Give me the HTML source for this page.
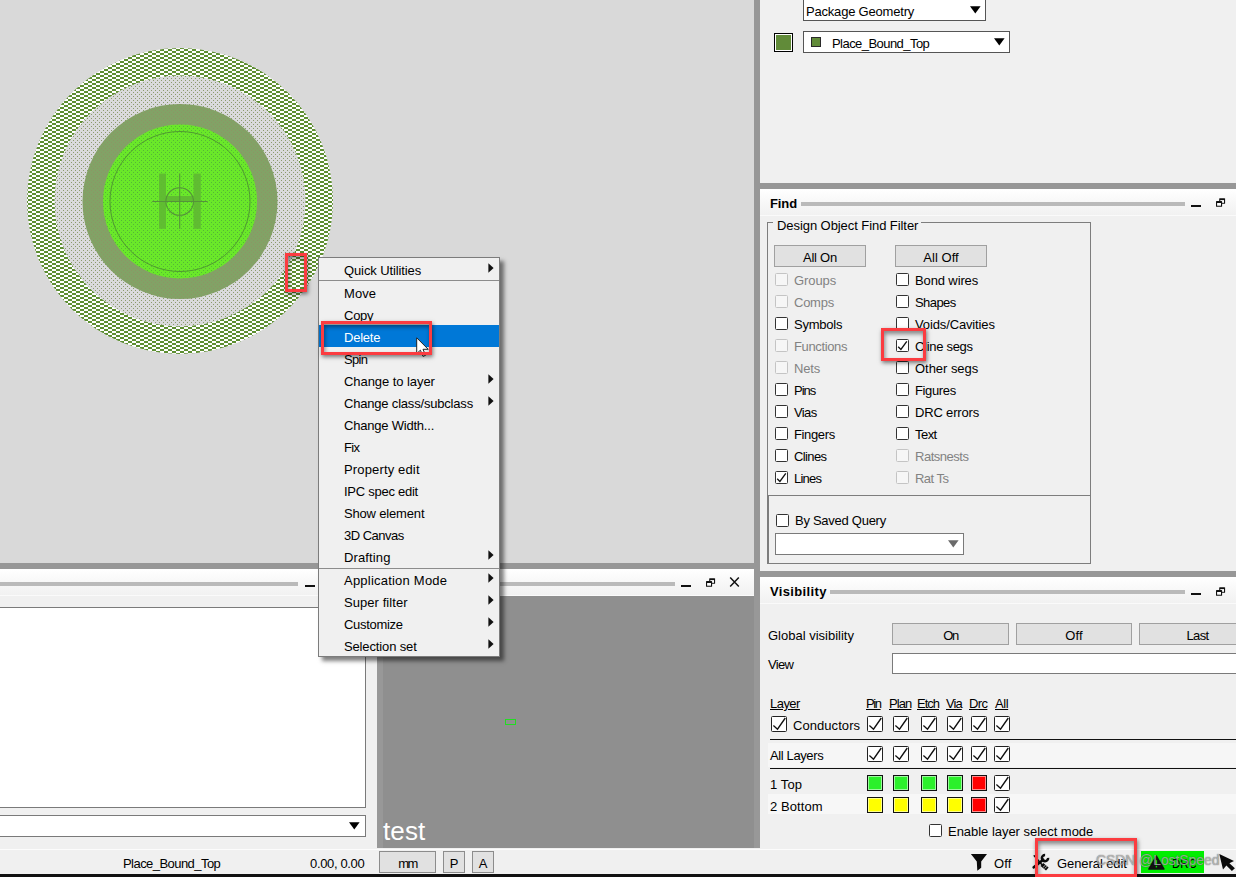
<!DOCTYPE html>
<html>
<head>
<meta charset="utf-8">
<title>PCB Editor</title>
<style>
html,body{margin:0;padding:0;}
body{width:1236px;height:877px;overflow:hidden;position:relative;background:#f0f0f0;
  font-family:"Liberation Sans",sans-serif;font-size:13px;color:#000;}
.abs{position:absolute;}
.t{position:absolute;white-space:nowrap;line-height:16px;height:16px;margin-top:1px;}
.dis{color:#828282;}
.div{position:absolute;background:#979797;}
.hdr{position:absolute;background:linear-gradient(#ffffff,#f1f1f1);border-bottom:1px solid #fafafa;box-sizing:border-box;}
.hline{position:absolute;height:4px;background:#bababa;}
.btn{position:absolute;box-sizing:border-box;background:#e1e1e1;border:1px solid #a0a0a0;text-align:center;white-space:nowrap;}
.cb{position:absolute;box-sizing:border-box;width:13px;height:13px;border:1px solid #333;border-radius:1.5px;background:#fff;}
.cb.d{border-color:#c4c4c4;background:#f6f6f6;}
.cb16{position:absolute;box-sizing:border-box;width:16px;height:16px;border:1px solid #222;border-radius:1.5px;background:#fff;}
.sw{position:absolute;box-sizing:border-box;width:16px;height:16px;border:1px solid #111;box-shadow:inset 0 0 0 1px rgba(255,255,255,.55);}
.inp{position:absolute;box-sizing:border-box;background:#fff;border:1px solid #7a7a7a;}
.red{position:absolute;box-sizing:border-box;border:3px solid #fb3c40;box-shadow:1px 2px 4px 0 rgba(0,0,0,.5),inset 1px 3px 4px 0 rgba(0,0,0,.44);}
</style>
</head>
<body>

<!-- ===== design canvas ===== -->
<div class="abs" id="canvas" style="left:0;top:0;width:754px;height:563px;background:#d9d9d9;overflow:hidden;">
<svg width="754" height="563" viewBox="0 0 754 563" style="position:absolute;left:0;top:0;">
  <defs>
    <pattern id="chk" x="0" y="1" width="8" height="4" patternUnits="userSpaceOnUse">
      <rect width="8" height="4" fill="#ffffff"/>
      <rect x="0" y="0" width="4" height="2" fill="#5e8f32"/>
      <rect x="4" y="2" width="4" height="2" fill="#5e8f32"/>
    </pattern>
    <pattern id="dotA" x="0" y="0" width="4" height="4" patternUnits="userSpaceOnUse">
      <rect width="4" height="4" fill="#dadadc"/>
      <rect x="1" y="0" width="1" height="1" fill="#8b9a6c"/>
      <rect x="3" y="2" width="1" height="1" fill="#8b9a6c"/>
    </pattern>
    <pattern id="dotB" x="0" y="0" width="4" height="4" patternUnits="userSpaceOnUse">
      <rect width="4" height="4" fill="#82a266"/>
      <rect x="1" y="0" width="1" height="1" fill="#8c9664"/>
      <rect x="3" y="2" width="1" height="1" fill="#8c9664"/>
    </pattern>
    <pattern id="dotC" x="0" y="0" width="4" height="4" patternUnits="userSpaceOnUse">
      <rect width="4" height="4" fill="#6ae829"/>
      <rect x="1" y="0" width="1" height="1" fill="#54b836"/>
      <rect x="3" y="2" width="1" height="1" fill="#54b836"/>
    </pattern>
  </defs>
  <circle cx="180" cy="201" r="153" fill="url(#chk)"/>
  <circle cx="180" cy="201" r="125.5" fill="url(#dotA)"/>
  <circle cx="180" cy="201.5" r="97.5" fill="url(#dotB)"/>
  <circle cx="180" cy="201.5" r="77" fill="url(#dotC)"/>
  <circle cx="180" cy="201.5" r="70" fill="none" stroke="#4f9a30" stroke-width="1"/>
  <!-- H glyph shape and origin crosshair -->
  <g fill="#5fb832" fill-opacity="0.9">
    <rect x="159" y="173.6" width="7" height="55.2"/>
    <rect x="193.5" y="173.6" width="7.3" height="55.2"/>
    <rect x="166" y="196" width="27.5" height="5.3"/>
  </g>
  <g stroke="#55933a" stroke-width="1.1" fill="none">
    <line x1="152.2" y1="201.5" x2="207.6" y2="201.5"/>
    <line x1="179.7" y1="173.6" x2="179.7" y2="228.8"/>
    <circle cx="179.7" cy="201.5" r="13.8"/>
  </g>
</svg>
</div>

<!-- dividers -->
<div class="div" style="left:754px;top:0;width:6px;height:848px;"></div>
<div class="div" style="left:0;top:563px;width:754px;height:6px;"></div>
<div class="div" style="left:760px;top:183px;width:476px;height:6px;"></div>
<div class="div" style="left:760px;top:571px;width:476px;height:6px;"></div>

<!-- ===== options panel (top right) ===== -->
<div class="inp" style="left:803px;top:-2px;width:183px;height:23px;border-color:#555;"></div>
<div class="t" style="left:806px;top:3px;letter-spacing:-0.20px;">Package Geometry</div>
<svg class="abs" style="left:970px;top:6px;" width="11" height="8" viewBox="0 0 11 8"><path d="M0 0.3 H10.6 L5.3 7.4 Z" fill="#000"/></svg>
<div class="abs" style="left:774px;top:33px;width:19px;height:19px;box-sizing:border-box;border:1px solid #000;background:#fff;"><div style="position:absolute;left:1px;top:1px;right:1px;bottom:1px;background:#618b39;"></div></div>
<div class="inp" style="left:803px;top:31px;width:207px;height:22px;border-color:#555;"></div>
<div class="abs" style="left:811px;top:37px;width:10px;height:10px;box-sizing:border-box;border:1px solid #2a2a2a;background:#618b39;"></div>
<div class="t" style="left:832px;top:35px;letter-spacing:-0.55px;">Place_Bound_Top</div>
<svg class="abs" style="left:994px;top:38px;" width="11" height="8" viewBox="0 0 11 8"><path d="M0 0.3 H10.6 L5.3 7.4 Z" fill="#000"/></svg>
<!-- ===== Find panel ===== -->
<div class="hdr" style="left:760px;top:189px;width:476px;height:27px;"></div>
<div class="t" style="left:770px;top:195px;font-weight:bold;letter-spacing:-0.11px;">Find</div>
<div class="hline" style="left:801px;top:202px;width:384px;"></div>
<div class="abs" style="left:1191px;top:205px;width:10px;height:2px;background:#111;"></div>
<svg class="abs" style="left:1216px;top:197px;" width="10" height="10" viewBox="0 0 10 10"><rect x="3.2" y="1.2" width="5.9" height="5.6" rx="0.6" fill="#111"/><rect x="4.3" y="3.1" width="3.7" height="2.7" fill="#fff"/><rect x="0" y="4.1" width="6.1" height="5.7" rx="0.6" fill="#111"/><rect x="1.1" y="6" width="3.9" height="2.7" fill="#fff"/></svg>
<div class="abs" style="left:767px;top:222px;width:324px;height:342px;box-sizing:border-box;border:1px solid #7d7d7d;"></div>
<div class="abs" style="left:773px;top:217px;width:148px;height:12px;background:#f0f0f0;"></div>
<div class="t" style="left:777px;top:217px;letter-spacing:-0.07px;">Design Object Find Filter</div>
<div class="abs" style="left:768px;top:495px;width:322px;height:1px;background:#7d7d7d;"></div><div class="abs" style="left:768px;top:496px;width:1px;height:67px;background:#7d7d7d;"></div>
<div class="btn" style="left:774px;top:245px;width:92px;height:22px;line-height:22px;"><span style="position:relative;top:1px;letter-spacing:-0.26px;">All On</span></div>
<div class="btn" style="left:895px;top:245px;width:92px;height:22px;line-height:22px;"><span style="position:relative;top:1px;letter-spacing:0.05px;">All Off</span></div>
<div class="cb d" style="left:775px;top:273px;"></div><div class="t dis" style="left:794px;top:272px;letter-spacing:-0.07px;">Groups</div>
<div class="cb" style="left:896px;top:273px;"></div><div class="t" style="left:915px;top:272px;letter-spacing:-0.12px;">Bond wires</div>
<div class="cb d" style="left:775px;top:295px;"></div><div class="t dis" style="left:794px;top:294px;letter-spacing:-0.25px;">Comps</div>
<div class="cb" style="left:896px;top:295px;"></div><div class="t" style="left:915px;top:294px;letter-spacing:-0.58px;">Shapes</div>
<div class="cb" style="left:775px;top:317px;"></div><div class="t" style="left:794px;top:316px;letter-spacing:-0.24px;">Symbols</div>
<div class="cb" style="left:896px;top:317px;"></div><div class="t" style="left:915px;top:316px;letter-spacing:-0.13px;">Voids/Cavities</div>
<div class="cb d" style="left:775px;top:339px;"></div><div class="t dis" style="left:794px;top:338px;letter-spacing:-0.37px;">Functions</div>
<div class="cb" style="left:896px;top:339px;"><svg width="11" height="11" viewBox="0 0 11 11" style="position:absolute;left:0;top:0"><path d="M1.2 6.8 L3.9 9.4 L9.8 1.4" fill="none" stroke="#111" stroke-width="1.35"/></svg></div><div class="t" style="left:915px;top:338px;letter-spacing:-0.30px;">Cline segs</div>
<div class="cb d" style="left:775px;top:361px;"></div><div class="t dis" style="left:794px;top:360px;letter-spacing:-0.14px;">Nets</div>
<div class="cb" style="left:896px;top:361px;"></div><div class="t" style="left:915px;top:360px;letter-spacing:-0.04px;">Other segs</div>
<div class="cb" style="left:775px;top:383px;"></div><div class="t" style="left:794px;top:382px;letter-spacing:-1.03px;">Pins</div>
<div class="cb" style="left:896px;top:383px;"></div><div class="t" style="left:915px;top:382px;letter-spacing:-0.36px;">Figures</div>
<div class="cb" style="left:775px;top:405px;"></div><div class="t" style="left:794px;top:404px;letter-spacing:-0.62px;">Vias</div>
<div class="cb" style="left:896px;top:405px;"></div><div class="t" style="left:915px;top:404px;letter-spacing:-0.17px;">DRC errors</div>
<div class="cb" style="left:775px;top:427px;"></div><div class="t" style="left:794px;top:426px;letter-spacing:-0.36px;">Fingers</div>
<div class="cb" style="left:896px;top:427px;"></div><div class="t" style="left:915px;top:426px;letter-spacing:-0.55px;">Text</div>
<div class="cb" style="left:775px;top:449px;"></div><div class="t" style="left:794px;top:448px;letter-spacing:-0.62px;">Clines</div>
<div class="cb d" style="left:896px;top:449px;"></div><div class="t dis" style="left:915px;top:448px;letter-spacing:-0.48px;">Ratsnests</div>
<div class="cb" style="left:775px;top:471px;"><svg width="11" height="11" viewBox="0 0 11 11" style="position:absolute;left:0;top:0"><path d="M1.2 6.8 L3.9 9.4 L9.8 1.4" fill="none" stroke="#111" stroke-width="1.35"/></svg></div><div class="t" style="left:794px;top:470px;letter-spacing:-0.79px;">Lines</div>
<div class="cb d" style="left:896px;top:471px;"></div><div class="t dis" style="left:915px;top:470px;letter-spacing:-0.52px;">Rat Ts</div>
<div class="cb" style="left:776px;top:514px;"></div><div class="t" style="left:795px;top:512px;letter-spacing:-0.27px;">By Saved Query</div>
<div class="inp" style="left:775px;top:533px;width:189px;height:22px;"></div>
<svg class="abs" style="left:948px;top:540px;" width="11" height="8" viewBox="0 0 11 8"><path d="M0 0.3 H10.6 L5.3 7.4 Z" fill="#6a6a6a"/></svg>

<!-- ===== Visibility panel ===== -->
<div class="hdr" style="left:760px;top:577px;width:476px;height:27px;"></div>
<div class="t" style="left:770px;top:583px;font-weight:bold;letter-spacing:0.35px;">Visibility</div>
<div class="hline" style="left:830px;top:590px;width:355px;"></div>
<div class="abs" style="left:1191px;top:593px;width:10px;height:2px;background:#111;"></div>
<svg class="abs" style="left:1216px;top:586px;" width="10" height="10" viewBox="0 0 10 10"><rect x="3.2" y="1.2" width="5.9" height="5.6" rx="0.6" fill="#111"/><rect x="4.3" y="3.1" width="3.7" height="2.7" fill="#fff"/><rect x="0" y="4.1" width="6.1" height="5.7" rx="0.6" fill="#111"/><rect x="1.1" y="6" width="3.9" height="2.7" fill="#fff"/></svg>
<div class="t" style="left:768px;top:627px;">Global visibility</div>
<div class="btn" style="left:892px;top:623px;width:117px;height:22px;line-height:22px;"><span style="position:relative;top:1px;letter-spacing:-1.34px;">On</span></div>
<div class="btn" style="left:1016px;top:623px;width:116px;height:22px;line-height:22px;"><span style="position:relative;top:1px;letter-spacing:0.10px;">Off</span></div>
<div class="btn" style="left:1139px;top:623px;width:117px;height:22px;line-height:22px;"><span style="position:relative;top:1px;letter-spacing:-0.66px;">Last</span></div>
<div class="t" style="left:768px;top:656px;letter-spacing:-0.65px;">View</div>
<div class="inp" style="left:892px;top:653px;width:360px;height:21px;"></div>
<div class="t" style="left:770px;top:695px;text-decoration:underline;letter-spacing:-0.53px;">Layer</div>
<div class="t" style="left:866px;top:695px;text-decoration:underline;letter-spacing:-1.40px;">Pin</div>
<div class="t" style="left:889px;top:695px;text-decoration:underline;letter-spacing:-0.91px;">Plan</div>
<div class="t" style="left:917px;top:695px;text-decoration:underline;letter-spacing:-1.01px;">Etch</div>
<div class="t" style="left:946px;top:695px;text-decoration:underline;letter-spacing:-0.93px;">Via</div>
<div class="t" style="left:969px;top:695px;text-decoration:underline;letter-spacing:-0.61px;">Drc</div>
<div class="t" style="left:995px;top:695px;text-decoration:underline;letter-spacing:-0.43px;">All</div>
<div class="cb16" style="left:771px;top:716px;"><svg width="14" height="14" viewBox="0 0 14 14" style="position:absolute;left:0;top:0"><path d="M1.4 8.6 L5.5 12.2 L13.3 1" fill="none" stroke="#111" stroke-width="1.35"/></svg></div>
<div class="t" style="left:793px;top:717px;letter-spacing:0.06px;">Conductors</div>
<div class="cb16" style="left:867px;top:716px;"><svg width="14" height="14" viewBox="0 0 14 14" style="position:absolute;left:0;top:0"><path d="M1.4 8.6 L5.5 12.2 L13.3 1" fill="none" stroke="#111" stroke-width="1.35"/></svg></div>
<div class="cb16" style="left:893px;top:716px;"><svg width="14" height="14" viewBox="0 0 14 14" style="position:absolute;left:0;top:0"><path d="M1.4 8.6 L5.5 12.2 L13.3 1" fill="none" stroke="#111" stroke-width="1.35"/></svg></div>
<div class="cb16" style="left:921px;top:716px;"><svg width="14" height="14" viewBox="0 0 14 14" style="position:absolute;left:0;top:0"><path d="M1.4 8.6 L5.5 12.2 L13.3 1" fill="none" stroke="#111" stroke-width="1.35"/></svg></div>
<div class="cb16" style="left:947px;top:716px;"><svg width="14" height="14" viewBox="0 0 14 14" style="position:absolute;left:0;top:0"><path d="M1.4 8.6 L5.5 12.2 L13.3 1" fill="none" stroke="#111" stroke-width="1.35"/></svg></div>
<div class="cb16" style="left:971px;top:716px;"><svg width="14" height="14" viewBox="0 0 14 14" style="position:absolute;left:0;top:0"><path d="M1.4 8.6 L5.5 12.2 L13.3 1" fill="none" stroke="#111" stroke-width="1.35"/></svg></div>
<div class="cb16" style="left:994px;top:716px;"><svg width="14" height="14" viewBox="0 0 14 14" style="position:absolute;left:0;top:0"><path d="M1.4 8.6 L5.5 12.2 L13.3 1" fill="none" stroke="#111" stroke-width="1.35"/></svg></div>
<div class="abs" style="left:770px;top:739px;width:466px;height:1px;background:#111;"></div>
<div class="abs" style="left:768px;top:743px;width:468px;height:24px;background:#f6f6f6;"></div>
<div class="t" style="left:770px;top:747px;letter-spacing:-0.38px;">All Layers</div>
<div class="cb16" style="left:867px;top:746px;"><svg width="14" height="14" viewBox="0 0 14 14" style="position:absolute;left:0;top:0"><path d="M1.4 8.6 L5.5 12.2 L13.3 1" fill="none" stroke="#111" stroke-width="1.35"/></svg></div>
<div class="cb16" style="left:893px;top:746px;"><svg width="14" height="14" viewBox="0 0 14 14" style="position:absolute;left:0;top:0"><path d="M1.4 8.6 L5.5 12.2 L13.3 1" fill="none" stroke="#111" stroke-width="1.35"/></svg></div>
<div class="cb16" style="left:921px;top:746px;"><svg width="14" height="14" viewBox="0 0 14 14" style="position:absolute;left:0;top:0"><path d="M1.4 8.6 L5.5 12.2 L13.3 1" fill="none" stroke="#111" stroke-width="1.35"/></svg></div>
<div class="cb16" style="left:947px;top:746px;"><svg width="14" height="14" viewBox="0 0 14 14" style="position:absolute;left:0;top:0"><path d="M1.4 8.6 L5.5 12.2 L13.3 1" fill="none" stroke="#111" stroke-width="1.35"/></svg></div>
<div class="cb16" style="left:971px;top:746px;"><svg width="14" height="14" viewBox="0 0 14 14" style="position:absolute;left:0;top:0"><path d="M1.4 8.6 L5.5 12.2 L13.3 1" fill="none" stroke="#111" stroke-width="1.35"/></svg></div>
<div class="cb16" style="left:994px;top:746px;"><svg width="14" height="14" viewBox="0 0 14 14" style="position:absolute;left:0;top:0"><path d="M1.4 8.6 L5.5 12.2 L13.3 1" fill="none" stroke="#111" stroke-width="1.35"/></svg></div>
<div class="abs" style="left:770px;top:768px;width:466px;height:1px;background:#111;"></div>
<div class="abs" style="left:768px;top:794px;width:468px;height:20px;background:#f7f7f7;"></div>
<div class="t" style="left:770px;top:776px;letter-spacing:0.11px;">1 Top</div>
<div class="t" style="left:770px;top:798px;letter-spacing:0.07px;">2 Bottom</div>
<div class="sw" style="left:867px;top:775px;background:#2cf02c;"></div>
<div class="sw" style="left:893px;top:775px;background:#2cf02c;"></div>
<div class="sw" style="left:921px;top:775px;background:#2cf02c;"></div>
<div class="sw" style="left:947px;top:775px;background:#2cf02c;"></div>
<div class="sw" style="left:971px;top:775px;background:#ff0000;"></div>
<div class="cb16" style="left:994px;top:775px;"><svg width="14" height="14" viewBox="0 0 14 14" style="position:absolute;left:0;top:0"><path d="M1.4 8.6 L5.5 12.2 L13.3 1" fill="none" stroke="#111" stroke-width="1.35"/></svg></div>
<div class="sw" style="left:867px;top:797px;background:#ffff00;"></div>
<div class="sw" style="left:893px;top:797px;background:#ffff00;"></div>
<div class="sw" style="left:921px;top:797px;background:#ffff00;"></div>
<div class="sw" style="left:947px;top:797px;background:#ffff00;"></div>
<div class="sw" style="left:971px;top:797px;background:#ff0000;"></div>
<div class="cb16" style="left:994px;top:797px;"><svg width="14" height="14" viewBox="0 0 14 14" style="position:absolute;left:0;top:0"><path d="M1.4 8.6 L5.5 12.2 L13.3 1" fill="none" stroke="#111" stroke-width="1.35"/></svg></div>
<div class="cb" style="left:929px;top:824px;"></div><div class="t" style="left:948px;top:823px;letter-spacing:-0.03px;">Enable layer select mode</div>

<!-- ===== bottom-left command panel ===== -->
<div class="hdr" style="left:0;top:569px;width:377px;height:27px;"></div>
<div class="hline" style="left:0;top:582px;width:298px;"></div>
<div class="abs" style="left:305px;top:585px;width:10px;height:2px;background:#111;"></div>
<div class="inp" style="left:-2px;top:607px;width:368px;height:201px;"></div>
<div class="inp" style="left:-2px;top:815px;width:368px;height:22px;"></div>
<svg class="abs" style="left:349px;top:822px;" width="11" height="8" viewBox="0 0 11 8"><path d="M0 0.3 H10.6 L5.3 7.4 Z" fill="#000"/></svg>
<!-- ===== bottom-middle world view panel ===== -->
<div class="hdr" style="left:377px;top:569px;width:377px;height:27px;"></div>
<div class="hline" style="left:377px;top:582px;width:298px;"></div>
<div class="abs" style="left:681px;top:585px;width:10px;height:2px;background:#111;"></div>
<svg class="abs" style="left:706px;top:577px;" width="10" height="10" viewBox="0 0 10 10"><rect x="3.2" y="1.2" width="5.9" height="5.6" rx="0.6" fill="#111"/><rect x="4.3" y="3.1" width="3.7" height="2.7" fill="#fff"/><rect x="0" y="4.1" width="6.1" height="5.7" rx="0.6" fill="#111"/><rect x="1.1" y="6" width="3.9" height="2.7" fill="#fff"/></svg>
<svg class="abs" style="left:729px;top:577px;" width="11" height="11" viewBox="0 0 11 11"><path d="M1.2 0.6 L9.8 9.4 M9.8 0.6 L1.2 9.4" stroke="#111" stroke-width="1.5" fill="none"/></svg>
<div class="abs" style="left:377px;top:596px;width:383px;height:252px;background:#989898;"></div>
<div class="abs" style="left:383px;top:596px;width:371px;height:252px;background:#8f8f8f;"></div>
<div class="abs" style="left:505px;top:719px;width:11px;height:6px;box-sizing:border-box;border:1px solid #22dd22;"></div>
<div class="t" style="left:383px;top:814px;font-size:26px;line-height:32px;height:32px;color:#fff;letter-spacing:0.13px;">test</div>
<!-- ===== status bar ===== -->
<div class="abs" style="left:0;top:848px;width:1236px;height:27px;background:#f0f0f0;"></div><div class="abs" style="left:0;top:849px;width:1236px;height:1px;background:#fcfcfc;"></div>
<div class="abs" style="left:0;top:874px;width:1236px;height:3px;background:#111;"></div>
<div class="t" style="left:123px;top:855px;letter-spacing:-0.55px;">Place_Bound_Top</div>
<div class="t" style="left:310px;top:855px;letter-spacing:-0.35px;">0.00, 0.00</div>
<div class="btn" style="left:379px;top:851px;width:57px;height:22px;line-height:20px;border-color:#8c8c8c;"><span style="position:relative;top:2px;letter-spacing:-1.67px;">mm</span></div>
<div class="btn" style="left:443px;top:851px;width:22px;height:22px;line-height:20px;border-color:#8c8c8c;"><span style="position:relative;top:2px;">P</span></div>
<div class="btn" style="left:472px;top:851px;width:22px;height:22px;line-height:20px;border-color:#8c8c8c;"><span style="position:relative;top:2px;">A</span></div>
<svg class="abs" style="left:970px;top:853px;" width="17" height="18" viewBox="0 0 17 18"><path d="M0.9 0.9 H17.1 L11.2 8.4 V14.8 L7.3 17.7 L6.8 8.4 Z" fill="#0a0a0a"/></svg>
<div class="t" style="left:994px;top:855px;letter-spacing:0.10px;">Off</div>
<svg class="abs" style="left:1032px;top:853px;" width="18" height="18" viewBox="0 0 18 18"><g stroke="#0c0c0c" fill="none"><path d="M1.8 14.3 L11.2 6.8" stroke-width="2.7" stroke-linecap="round"/><path d="M16.1 4.9 A3.1 3.1 0 1 1 13.1 2" stroke-width="2.5"/><path d="M2.2 2.8 L9.8 11.5" stroke-width="1.5" stroke-linecap="round"/><path d="M9.9 11.4 L15.3 16.1" stroke-width="4"/><path d="M11 14.3 L13.6 12 M12.5 15.6 L15.1 13.3" stroke="#f0f0f0" stroke-width="0.7"/></g></svg>
<div class="t" style="left:1057px;top:855px;letter-spacing:-0.08px;">General edit</div>
<div class="abs" style="left:1141px;top:851px;width:63px;height:22px;background:#00ee00;"></div>
<svg class="abs" style="left:1148px;top:855px;" width="17" height="15" viewBox="0 0 17 15"><path d="M8.4 1 L16 14 H0.8 Z" fill="#111" stroke="#111" stroke-width="1.4" stroke-linejoin="round"/><rect x="7.7" y="5.2" width="1.4" height="4.6" fill="#00ee00"/><rect x="7.7" y="10.9" width="1.4" height="1.5" fill="#00ee00"/></svg>
<div class="t" style="left:1172px;top:855px;transform:scaleX(.875);transform-origin:0 0;">DRC</div>

<!-- ===== context menu ===== -->
<div class="abs" id="menu" style="left:318px;top:257px;width:182px;height:400px;box-sizing:border-box;background:#f0f0f0;border:1px solid #7c7c7c;box-shadow:4px 4px 4px rgba(0,0,0,.5);"></div>
<div class="abs" style="left:319px;top:280px;width:180px;height:1px;background:#8c8c8c;"></div>
<div class="abs" style="left:319px;top:568px;width:180px;height:1px;background:#8c8c8c;"></div>
<div class="abs" style="left:319px;top:325px;width:180px;height:22px;background:#0078d7;"></div>
<div class="t" style="left:344px;top:262px;letter-spacing:-0.11px;">Quick Utilities</div>
<svg class="abs" style="left:488px;top:263px;" width="6" height="10" viewBox="0 0 6 10"><path d="M0.4 0.3 L5.6 5 L0.4 9.7 Z" fill="#111"/></svg>
<div class="t" style="left:344px;top:285px;letter-spacing:0.10px;">Move</div>
<div class="t" style="left:344px;top:307px;letter-spacing:-0.25px;">Copy</div>
<div class="t" style="left:344px;top:329px; color:#fff;letter-spacing:-0.24px;">Delete</div>
<div class="t" style="left:344px;top:351px;letter-spacing:-0.68px;">Spin</div>
<div class="t" style="left:344px;top:373px;letter-spacing:-0.06px;">Change to layer</div>
<svg class="abs" style="left:488px;top:374px;" width="6" height="10" viewBox="0 0 6 10"><path d="M0.4 0.3 L5.6 5 L0.4 9.7 Z" fill="#111"/></svg>
<div class="t" style="left:344px;top:395px;letter-spacing:-0.19px;">Change class/subclass</div>
<svg class="abs" style="left:488px;top:396px;" width="6" height="10" viewBox="0 0 6 10"><path d="M0.4 0.3 L5.6 5 L0.4 9.7 Z" fill="#111"/></svg>
<div class="t" style="left:344px;top:417px;letter-spacing:-0.21px;">Change Width...</div>
<div class="t" style="left:344px;top:439px;letter-spacing:-0.72px;">Fix</div>
<div class="t" style="left:344px;top:461px;letter-spacing:0.15px;">Property edit</div>
<div class="t" style="left:344px;top:483px;letter-spacing:-0.26px;">IPC spec edit</div>
<div class="t" style="left:344px;top:505px;letter-spacing:-0.17px;">Show element</div>
<div class="t" style="left:344px;top:527px;letter-spacing:-0.50px;">3D Canvas</div>
<div class="t" style="left:344px;top:549px;letter-spacing:0.12px;">Drafting</div>
<svg class="abs" style="left:488px;top:550px;" width="6" height="10" viewBox="0 0 6 10"><path d="M0.4 0.3 L5.6 5 L0.4 9.7 Z" fill="#111"/></svg>
<div class="t" style="left:344px;top:572px;letter-spacing:0.22px;">Application Mode</div>
<svg class="abs" style="left:488px;top:573px;" width="6" height="10" viewBox="0 0 6 10"><path d="M0.4 0.3 L5.6 5 L0.4 9.7 Z" fill="#111"/></svg>
<div class="t" style="left:344px;top:594px;letter-spacing:0.06px;">Super filter</div>
<svg class="abs" style="left:488px;top:595px;" width="6" height="10" viewBox="0 0 6 10"><path d="M0.4 0.3 L5.6 5 L0.4 9.7 Z" fill="#111"/></svg>
<div class="t" style="left:344px;top:616px;letter-spacing:-0.30px;">Customize</div>
<svg class="abs" style="left:488px;top:617px;" width="6" height="10" viewBox="0 0 6 10"><path d="M0.4 0.3 L5.6 5 L0.4 9.7 Z" fill="#111"/></svg>
<div class="t" style="left:344px;top:638px;letter-spacing:-0.14px;">Selection set</div>
<svg class="abs" style="left:488px;top:639px;" width="6" height="10" viewBox="0 0 6 10"><path d="M0.4 0.3 L5.6 5 L0.4 9.7 Z" fill="#111"/></svg>
<!-- ===== annotations ===== -->
<svg class="abs" style="left:416px;top:337px;" width="14" height="21" viewBox="0 0 14 21"><path d="M0.7 0.8 V16.6 L4.4 13.2 L7 19.4 L9.6 18.3 L7 12.3 H12.2 Z" fill="#fff" stroke="#222" stroke-width="1" stroke-linejoin="round"/></svg>
<div class="red" style="left:285px;top:253px;width:22px;height:39px;"></div>
<div class="red" style="left:321px;top:321px;width:111px;height:34px;"></div>
<div class="red" style="left:881px;top:328px;width:45px;height:33px;"></div>
<div class="red" style="left:1035px;top:838px;width:102px;height:39px;"></div>
<svg class="abs" style="left:1218px;top:852px;" width="20" height="22" viewBox="0 0 20 22"><path d="M1.3 2.1 L16 9 L11.4 11.2 L16.9 16.2 L13.9 18.9 L8.4 13.6 L5 17.5 Z" fill="#0a0a0a"/></svg>
<div class="t" style="left:1096px;top:850px;font-size:14px;line-height:18px;height:18px;color:rgba(240,240,240,.5);text-shadow:0 0 1px rgba(60,60,60,.7),0 0 1px rgba(60,60,60,.35);letter-spacing:-0.09px;">CSDN @LostSpeed</div>

</body>
</html>
